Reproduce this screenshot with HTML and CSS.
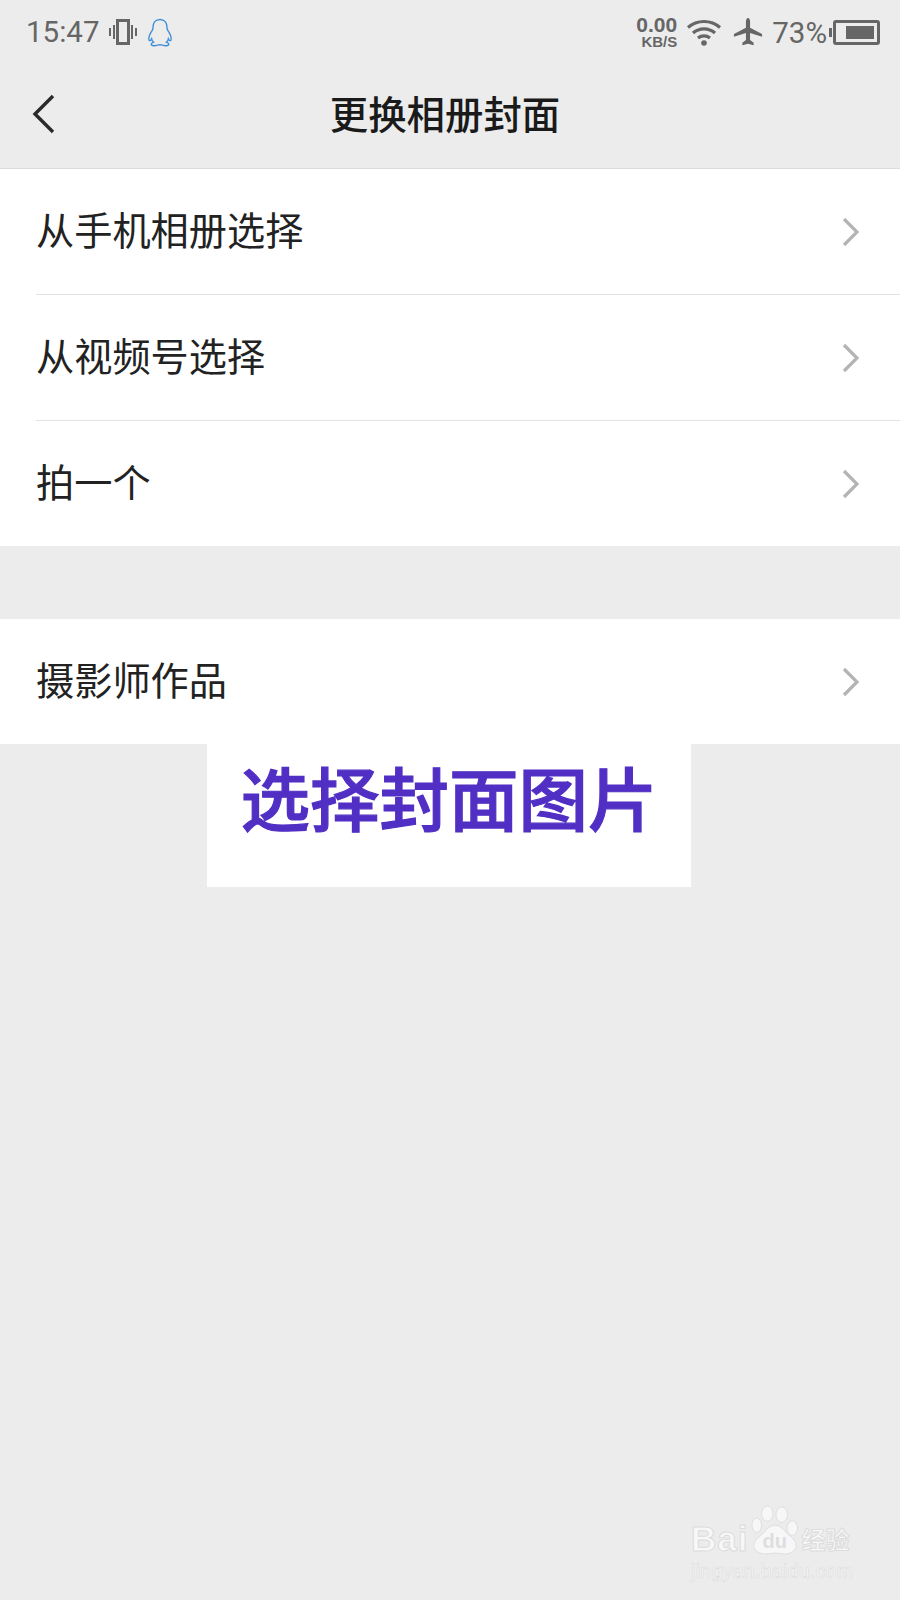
FILE: index.html
```html
<!DOCTYPE html>
<html lang="zh">
<head>
<meta charset="utf-8">
<title>更换相册封面</title>
<link rel="stylesheet" href="styles.css">
</head>
<body>
<div class="page">
  <div class="status">
    <div class="status-left">
      <span class="time">15:47</span>
      <svg class="ic-vib" viewBox="0 0 28 26" width="28" height="26"><rect x="8.5" y="1.500" width="11" height="23" fill="none" stroke="#666" stroke-width="3"/><path d="M1 9v8M5 6v14M23 6v14M27 9v8" stroke="#666" stroke-width="2" fill="none"/></svg>
      <svg class="ic-qq" viewBox="0 0 28 30" width="26" height="29" preserveAspectRatio="none"><path d="M14 1.500c-5 0-7.500 3.600-7.500 8 0 1.300-.2 2.200-.8 3.200C3.800 15.500 2 18 2 21c0 1.500.5 2.500 1 2.500s1.500-1 2-2c.3 1.500 1 2.700 2 3.500-1.500.5-2.500 1.200-2.500 2.200C4.500 28.500 7 28.800 9.500 28.500c1.800-.2 3-.8 4.500-.8s2.700.6 4.500.8c2.500.3 5 0 5-1.300 0-1-1-1.700-2.500-2.200 1-.8 1.700-2 2-3.500.5 1 1.500 2 2 2s1-1 1-2.500c0-3-1.800-5.500-3.700-8.300-.6-1-.8-1.900-.8-3.200 0-4.400-2.500-8-7.500-8z" fill="none" stroke="#3f8fd8" stroke-width="1.500"/></svg>
    </div>
    <div class="status-right">
      <div class="speed"><span class="speed-num">0.00</span><span class="speed-unit">KB/S</span></div>
      <svg class="ic-wifi" viewBox="0 0 36 28" width="36" height="28"><path d="M2 9.500C11 1.500 25 1.500 34 9.500M7 15c6.500-5.500 15.500-5.500 22 0M12 20c3.500-2.800 8.500-2.800 12 0" fill="none" stroke="#666" stroke-width="3.200"/><circle cx="18" cy="25" r="2.800" fill="#666"/></svg>
      <svg class="ic-plane" viewBox="0 0 32 30" width="30" height="30"><path d="M16 0c1.500 0 2.200 2 2.200 4v6.500L31 17v3l-12.800-4v7.500l3.800 3V29l-6-1.500L10 29v-2.500l3.800-3V16L1 20v-3l12.800-6.500V4c0-2 .7-4 2.200-4z" fill="#666"/></svg>
      <span class="pct">73%</span>
      <div class="battery"><div class="battery-fill"></div></div>
    </div>
  </div>

  <header class="nav">
    <svg class="ic-back" viewBox="0 0 24 40" width="24" height="40"><path d="M21 2 3 20l18 18" fill="none" stroke="#2a2a2a" stroke-width="3.400"/></svg>
    <h1 class="title">更换相册封面</h1>
  </header>

  <section class="group">
    <div class="row"><span class="label">从手机相册选择</span><svg class="chev" viewBox="0 0 18 30" width="18" height="30"><path d="M2 2l13 13L2 28" fill="none" stroke="#b4b4b4" stroke-width="3.200"/></svg></div>
    <div class="row"><span class="label">从视频号选择</span><svg class="chev" viewBox="0 0 18 30" width="18" height="30"><path d="M2 2l13 13L2 28" fill="none" stroke="#b4b4b4" stroke-width="3.200"/></svg></div>
    <div class="row"><span class="label">拍一个</span><svg class="chev" viewBox="0 0 18 30" width="18" height="30"><path d="M2 2l13 13L2 28" fill="none" stroke="#b4b4b4" stroke-width="3.200"/></svg></div>
  </section>

  <section class="group group-second">
    <div class="row"><span class="label">摄影师作品</span><svg class="chev" viewBox="0 0 18 30" width="18" height="30"><path d="M2 2l13 13L2 28" fill="none" stroke="#b4b4b4" stroke-width="3.200"/></svg></div>
  </section>

  <div class="banner">选择封面图片</div>

  <div class="watermark">
    <div class="wm-top">
      <span class="wm-bai">Bai</span>
      <span class="wm-paw">
        <svg viewBox="0 0 50 52" width="48" height="50"><g fill="#f7f7f7" stroke="#dcdcdc" stroke-width="1"><ellipse cx="17" cy="9" rx="6" ry="8"/><ellipse cx="32" cy="10" rx="6" ry="8"/><ellipse cx="6" cy="21" rx="5" ry="7.500"/><ellipse cx="43" cy="24" rx="5.500" ry="7.500"/><path d="M25 21c-6 0-9 5-13 9-6 5-9 8-9 12 0 6 6 9 12 9 4 0 7-1 10-1s6 1 10 1c6 0 12-3 12-9 0-4-3-7-9-12-4-4-7-9-13-9z"/></g></svg>
        <span class="wm-du">du</span>
      </span>
      <span class="wm-jy">经验</span>
    </div>
    <div class="wm-url">jingyan.baidu.com</div>
  </div>
</div>
</body>
</html>
```

FILE: styles.css
```css
* { box-sizing: border-box; }
html, body { margin: 0; padding: 0; }
body {
  width: 900px;
  height: 1600px;
  overflow: hidden;
  background: #ececec;
  font-family: "Noto Sans CJK SC", "Noto Sans", sans-serif;
}
.page { position: relative; width: 900px; height: 1600px; background: #ececec; }

.status {
  height: 64px;
  display: flex;
  justify-content: space-between;
  align-items: center;
  padding: 0 20px 0 26px;
}
.status-left, .status-right { display: flex; align-items: center; }
.time { font: 29.5px Roboto, sans-serif; color: #666; }
.ic-vib { margin-left: 10px; }
.ic-qq { margin-left: 10px; }
.speed { display: flex; flex-direction: column; align-items: flex-end; font-family: "Liberation Sans", sans-serif; font-weight: 700; color: #666; line-height: 1; position: relative; left: 1px; }
.speed-num { font-size: 21px; line-height: 19px; }
.speed-unit { font-size: 15px; line-height: 15px; }
.ic-wifi { margin-left: 10px; }
.ic-plane { margin-left: 11px; }
.pct { font: 29.5px Roboto, sans-serif; color: #666; margin-left: 9px; padding-top: 1px; }
.battery {
  position: relative;
  width: 47px;
  height: 25px;
  margin-left: 6px;
  border: 3px solid #666;
  border-radius: 3px;
  padding: 3px 3px 3px 10px;
}
.battery::before {
  content: "";
  position: absolute;
  left: -7px;
  top: 5px;
  width: 3px;
  height: 9px;
  background: #666;
}
.battery-fill { width: 100%; height: 100%; background: #666; }

.nav {
  position: relative;
  height: 105px;
  display: flex;
  align-items: center;
  justify-content: center;
  border-bottom: 1px solid #dcdcdc;
}
.ic-back { position: absolute; left: 32px; top: 30px; }
.title { margin: 0 0 7px; font-size: 38.4px; font-weight: 500; color: #1a1a1a; line-height: 1.2; padding-right: 10px; }

.group { background: #fff; }
.group-second { margin-top: 73px; }
.row {
  height: 126px;
  display: flex;
  align-items: center;
  justify-content: space-between;
  margin-left: 36px;
  padding-right: 40px;
  font-size: 38.2px;
  color: #222;
}
.row:first-child { height: 125px; }
.row + .row { border-top: 1px solid #e2e2e2; }
.label { margin-bottom: 6px; }

.banner {
  width: 484px;
  height: 143px;
  margin-left: 207px;
  background: #fff;
  color: #512fc4;
  font-size: 69.500px;
  font-weight: 500;
  -webkit-text-stroke: 1.200px #512fc4;
  line-height: 1;
  display: flex;
  align-items: flex-start;
  justify-content: center;
  padding-top: 17px;
}

.watermark {
  position: absolute;
  left: 691px;
  top: 1503px;
  width: 172px;
  color: #f7f7f7;
}
.wm-top { display: flex; align-items: flex-end; height: 52px; }
.wm-bai { font: 700 35px/32px "Liberation Sans", sans-serif; letter-spacing: 1px; -webkit-text-stroke: 1px #dcdcdc; }
.wm-paw { position: relative; width: 48px; height: 52px; margin-left: 3px; }
.wm-paw svg { position: absolute; left: 0; bottom: 0; }
.wm-du { position: absolute; left: 11px; bottom: 3px; font: 700 20px/22px "Liberation Sans", sans-serif; color: #dedede; }
.wm-jy { font-size: 24px; line-height: 32px; font-weight: 700; margin-left: 2px; -webkit-text-stroke: 1px #dcdcdc; white-space: nowrap; }
.wm-url { font: 19.5px/22px "Liberation Sans", sans-serif; letter-spacing: .3px; margin-top: 5px; -webkit-text-stroke: .6px #dcdcdc; white-space: nowrap; }
```
